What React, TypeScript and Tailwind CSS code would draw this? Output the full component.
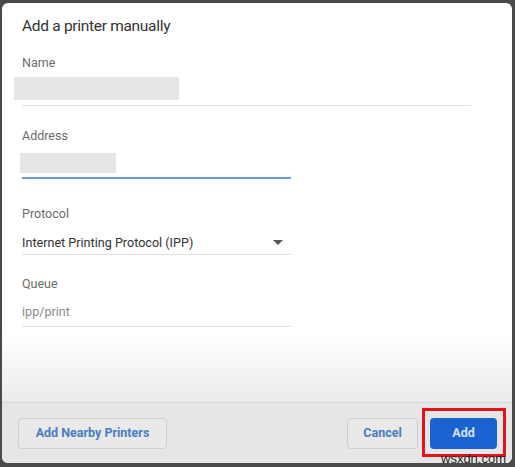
export default function App() {
  return (
    <div className="relative h-[467px] w-[515px] overflow-hidden bg-[#4a4a4a] font-['Roboto',sans-serif]">
      <div className="ml-[2px] mt-[3px] flex h-[460px] w-[510px] flex-col overflow-hidden rounded-[6px] bg-[linear-gradient(to_bottom,#ffffff_0px,#ffffff_330px,#ebebeb_399px)]">
        {/* Body */}
        <div className="flex flex-1 flex-col px-[20px] pt-[13px]">
          <h1 className="text-[15.5px] leading-[20px] tracking-[-0.3px] text-[#333]">Add a printer manually</h1>

          <div className="mt-[19px] text-[12.5px] leading-[16px] text-[#6b6b6b]">Name</div>
          <div className="-ml-[8px] mt-[6px] h-[23px] w-[165px] bg-[#e6e6e6]" />
          <div className="mt-[5px] h-px w-[449px] bg-[#e2e2e2]" />

          <div className="mt-[22px] text-[12.5px] leading-[16px] text-[#6b6b6b]">Address</div>
          <div className="-ml-[2px] mt-[9px] h-[20px] w-[96px] bg-[#e6e6e6]" />
          <div className="mt-[4px] h-[2px] w-[269px] bg-[#6e9bd9]" />

          <div className="mt-[27px] text-[12.5px] leading-[16px] text-[#6b6b6b]">Protocol</div>
          <div className="mt-[12px] flex h-[18px] w-[269px] items-center justify-between">
            <span className="text-[12.6px] leading-[18px] text-[#333]">Internet Printing Protocol (IPP)</span>
            <svg width="10" height="6" viewBox="0 0 10 6" className="mr-[8px]">
              <path d="M0 0 L10 0 L5 5 Z" fill="#555" />
            </svg>
          </div>
          <div className="mt-[2px] h-px w-[269px] bg-[#e2e2e2]" />

          <div className="mt-[21px] text-[12.5px] leading-[16px] text-[#6b6b6b]">Queue</div>
          <div className="mt-[11px] text-[12.6px] leading-[18px] text-[#8a8a8a]">ipp/print</div>
          <div className="mt-[5px] h-px w-[269px] bg-[#e2e2e2]" />
        </div>

        {/* Footer */}
        <div className="flex h-[61px] items-center border-t border-[#d6d6d6] bg-[#e6e6e6] pl-[16px] pr-[6px]">
          <button className="h-[31px] w-[149px] rounded-[4px] border border-[#cfcfcf] bg-[#e9e9e9] text-[12.5px] font-bold text-[#4a7cc4]">
            Add Nearby Printers
          </button>
          <div className="flex-1" />
          <button className="h-[31px] w-[71px] rounded-[4px] border border-[#cfcfcf] bg-[#e9e9e9] text-[12.5px] font-bold text-[#4a7cc4]">
            Cancel
          </button>
          <div className="ml-[4px] mt-[-2px] border-[3px] border-[#e3131b] pb-[5px] pl-[5px] pr-[6px] pt-[7px]">
            <button className="h-[31px] w-[67px] rounded-[4px] bg-[#1a62d0] text-[12.5px] font-bold text-[#d4e3f8]">
              Add
            </button>
          </div>
        </div>
      </div>

      {/* Watermark */}
      <div className="absolute left-[441px] top-[451px] font-['Liberation_Sans',sans-serif] text-[13px] leading-[15px] text-[#1e1e1e]">
        wsxdn.com
      </div>
    </div>
  );
}
